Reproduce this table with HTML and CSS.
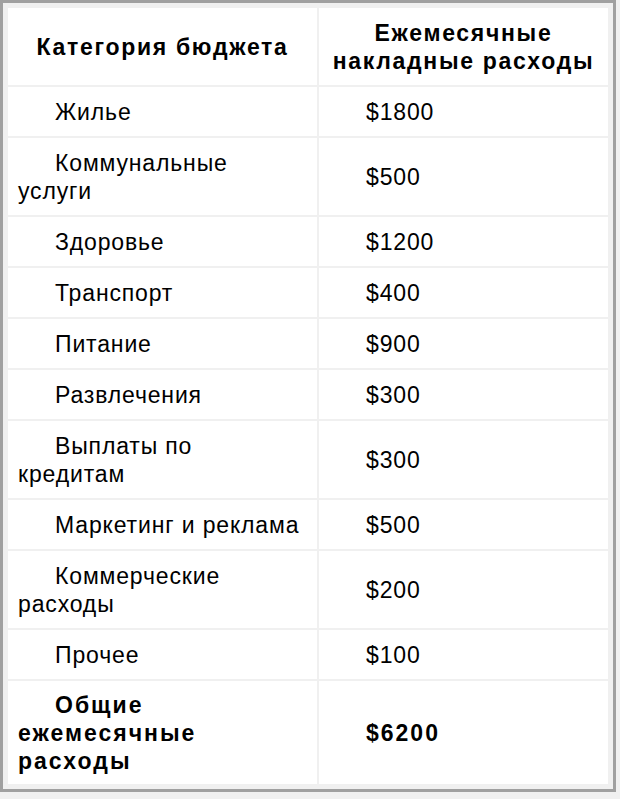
FILE: index.html
```html
<!DOCTYPE html>
<html lang="ru">
<head>
<meta charset="utf-8">
<title>Бюджет</title>
<link rel="stylesheet" href="styles.css">
</head>
<body>
<table class="budget">
  <thead>
    <tr>
      <th class="col-cat">Категория бюджета</th>
      <th class="col-sum">Ежемесячные накладные расходы</th>
    </tr>
  </thead>
  <tbody>
    <tr><td>Жилье</td><td>$1800</td></tr>
    <tr><td>Коммунальные услуги</td><td>$500</td></tr>
    <tr><td>Здоровье</td><td>$1200</td></tr>
    <tr><td>Транспорт</td><td>$400</td></tr>
    <tr><td>Питание</td><td>$900</td></tr>
    <tr><td>Развлечения</td><td>$300</td></tr>
    <tr><td>Выплаты по кредитам</td><td>$300</td></tr>
    <tr><td>Маркетинг и реклама</td><td>$500</td></tr>
    <tr><td>Коммерческие расходы</td><td>$200</td></tr>
    <tr><td>Прочее</td><td>$100</td></tr>
    <tr class="total"><td>Общие ежемесячные расходы</td><td>$6200</td></tr>
  </tbody>
</table>
</body>
</html>
```
FILE: styles.css
```css
html, body {
  margin: 0;
  padding: 0;
  background: #f0f0f0;
}
.budget {
  width: 616px;
  table-layout: fixed;
  border: 3px solid #a0a0a0;
  border-collapse: separate;
  border-spacing: 2px;
  padding: 3px;
  background: #f0f0f0;
  font-family: "Liberation Sans", Arial, sans-serif;
  font-size: 23px;
  line-height: 28px;
  color: #000;
}
.budget th, .budget td {
  box-sizing: border-box;
  background: #fff;
  padding: 11px 13px 10px 10px;
  vertical-align: middle;
}
.budget th {
  text-align: center;
  font-weight: bold;
  letter-spacing: 1.7px;
  padding-right: 10px;
}
.budget td {
  text-align: left;
  text-indent: 37px;
  letter-spacing: 0.85px;
}
.col-cat { width: 309px; }
.total td {
  font-weight: bold;
  letter-spacing: 2px;
  padding-top: 10px;
  padding-bottom: 9px;
}
```
